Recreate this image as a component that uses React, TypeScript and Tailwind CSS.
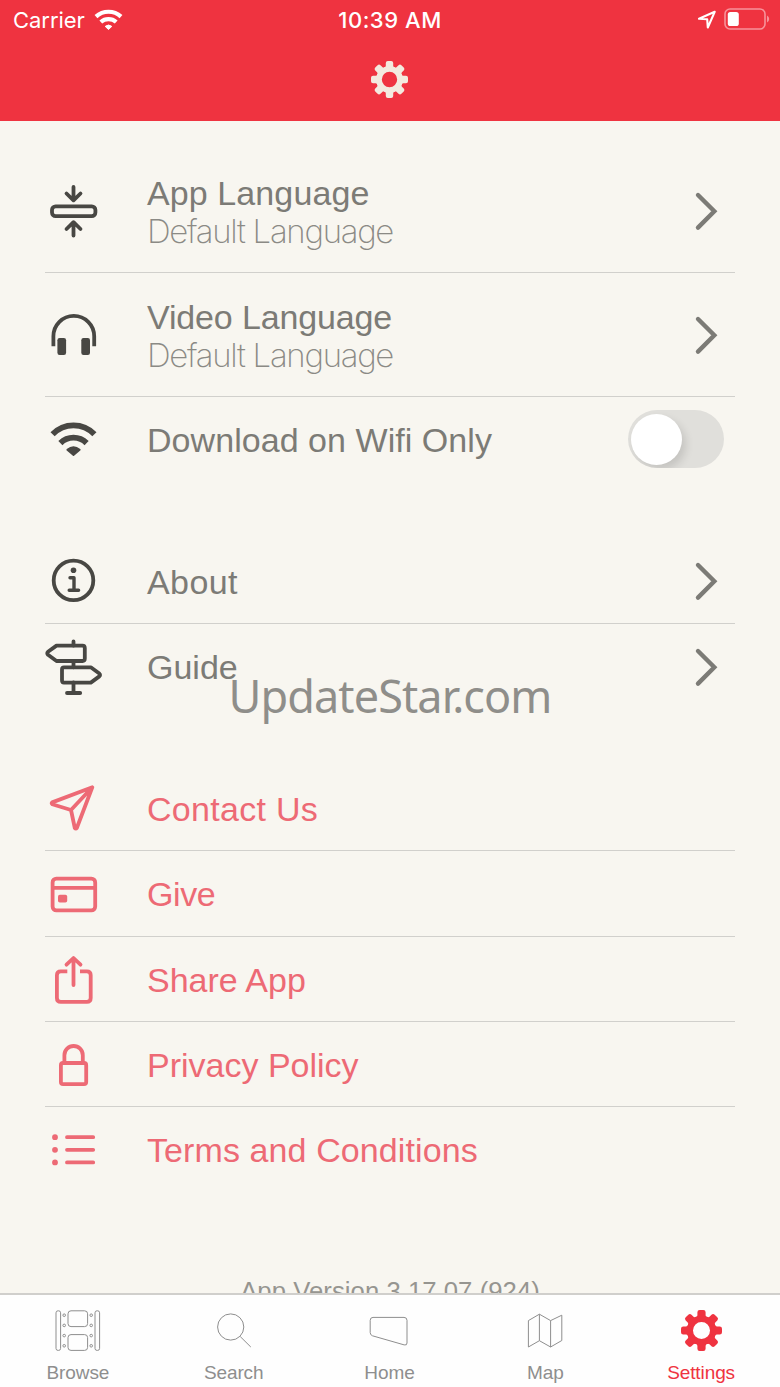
import type { ReactNode } from "react";

function Gear({ className }: { className: string }) {
  return (
    <svg viewBox="0 0 40 40" className={className} fill="currentColor">
      <circle cx="20" cy="20" r="11.3" fill="none" stroke="currentColor" strokeWidth="6" />
      {[0, 45, 90, 135, 180, 225, 270, 315].map((angle) => (
        <path
          key={angle}
          d="M16 2.2Q16 0 18.2 0H21.8Q24 0 24 2.2V5Q24 6.6 26 7.2L24 10H16L14 7.2Q16 6.6 16 5Z"
          transform={`rotate(${angle} 20 20)`}
        />
      ))}
    </svg>
  );
}

function Chevron() {
  return (
    <svg viewBox="0 0 24 40" className="mt-px mr-[17px] h-10 w-6 text-[#7c7b76]" fill="none" stroke="currentColor" strokeWidth="4.4" strokeLinecap="round" strokeLinejoin="miter">
      <path d="M4 4L20.3 20.3L4 36.6" />
    </svg>
  );
}

function Toggle() {
  return (
    <div className="mr-[11.5px] flex h-[58px] w-24 items-center overflow-hidden rounded-full bg-[#e0dfdb] pl-[3.5px]">
      <div className="h-[51px] w-[51px] rounded-full bg-white shadow-[4px_5px_9px_rgba(0,0,0,0.12)]" />
    </div>
  );
}

const icons = {
  appLanguage: (
    <>
      <path d="M29.5 6V19M22.5 12.5L29.5 19.3L36.5 12.5M29.5 54.5V41.5M22.5 48L29.5 41.2L36.5 48" />
      <rect x="8" y="25.3" width="43.4" height="9.8" rx="3.6" />
    </>
  ),
  headphones: (
    <>
      <path d="M9.4 41.3V31.3A20.4 20.4 0 0 1 50.2 31.3V41.3" strokeLinecap="butt" />
      <rect x="13.4" y="33" width="8.7" height="17" rx="2.2" fill="currentColor" stroke="none" />
      <rect x="37.3" y="33" width="8.7" height="17" rx="2.2" fill="currentColor" stroke="none" />
    </>
  ),
  wifi: (
    <>
      <path d="M8.6 24.2A29 29 0 0 1 50.4 24.2M16.4 33.1A18.5 18.5 0 0 1 42.6 33.1" strokeWidth="5.8" strokeLinecap="butt" />
      <path d="M23.3 39.8Q29.5 34.6 35.7 39.8L29.5 45Z" fill="currentColor" strokeWidth="1.8" />
    </>
  ),
  info: (
    <>
      <circle cx="29.5" cy="29.4" r="19.8" />
      <circle cx="29.5" cy="19.2" r="2.8" fill="currentColor" stroke="none" />
      <path d="M26 26.8H30V39.3M25.2 39.3H34.6" strokeWidth="3.4" />
    </>
  ),
  signpost: (
    <>
      <path d="M29.5 4.5V8.6M29.5 24V30.3M29.5 45.5V56M23 56H36.2" />
      <path d="M12.5 8.6H38.5Q40.8 8.6 40.8 11V21.6Q40.8 24 38.5 24H12.5L4 17.8Q2.5 16.3 4 14.8Z" />
      <path d="M46.8 30.3H20Q18 30.3 18 32.5V43.3Q18 45.6 20 45.6H46.8L55.3 39.4Q56.8 38 55.3 36.5Z" />
    </>
  ),
  send: (
    <path d="M48.3 9.3L8.2 24.4Q7 25.2 8.3 26.2L27 32L30.8 50Q31.8 51.2 32.8 50L48.3 9.3ZM27 32L48.3 9.3" />
  ),
  card: (
    <>
      <rect x="8.6" y="14.6" width="42.6" height="31.8" rx="3.8" />
      <path d="M9 23.8H51" />
      <rect x="14" y="30.7" width="9.2" height="7.8" rx="1.8" fill="currentColor" stroke="none" />
    </>
  ),
  share: (
    <>
      <path d="M23.3 22.3H16.8Q12.9 22.3 12.9 26.2V48.9Q12.9 52.8 16.8 52.8H42.8Q46.7 52.8 46.7 48.9V26.2Q46.7 22.3 42.8 22.3H36" strokeLinecap="butt" />
      <path d="M29.5 36V9.5M22.5 15.7L29.5 9L36.5 15.7" />
    </>
  ),
  lock: (
    <>
      <rect x="16.9" y="28" width="25.3" height="21.2" rx="2.2" />
      <path d="M20.4 28V20.2A9.2 9.2 0 0 1 38.8 20.2V28" />
    </>
  ),
  list: (
    <>
      <path d="M23 17.2H49.2M23 29.8H49.2M23 42.4H49.2" />
      <path d="M11 17.2H11.01M11 29.8H11.01M11 42.4H11.01" strokeWidth="5.8" />
    </>
  ),
};

type RowProps = {
  icon: ReactNode;
  title: string;
  tracking?: string;
  subtitle?: string;
  trailing?: ReactNode;
  accent?: boolean;
  last?: boolean;
};

function Row({ icon, title, tracking = "", subtitle, trailing, accent, last }: RowProps) {
  return (
    <div
      className={`flex items-center border-b ${last ? "border-transparent" : "border-[#d1d0cc]"} ${
        subtitle ? "h-[123.8px]" : "h-[85.4px]"
      }`}
    >
      <svg
        viewBox="0 0 60 60"
        className={`mt-px -ml-px h-[60px] w-[60px] shrink-0 ${accent ? "text-[#ed6a75]" : "text-[#484743]"}`}
        fill="none"
        stroke="currentColor"
        strokeWidth="3.8"
        strokeLinecap="round"
        strokeLinejoin="round"
      >
        {icon}
      </svg>
      <div className="ml-[43px] flex-1 pt-[2px] text-[34px] leading-[38px] whitespace-nowrap">
        <div className={`${tracking} ${accent ? "text-[#ed6a75]" : "text-[#7c7b76]"}`}>{title}</div>
        {subtitle && (
          <div className="font-['Inter'] text-[33px] font-extralight tracking-[-1.3px] text-[#8b8a85]">{subtitle}</div>
        )}
      </div>
      {trailing}
    </div>
  );
}

function Tab({ label, active, children }: { label: string; active?: boolean; children: ReactNode }) {
  return (
    <div className={`flex w-[155.8px] flex-col items-center ${active ? "text-[#ef3340]" : "text-[#8e8e8e]"}`}>
      <div className="mt-[13px] flex h-11 w-[60px] items-center justify-center">{children}</div>
      <div className="mt-[9px] text-[19px] leading-6 tracking-[-0.1px]">{label}</div>
    </div>
  );
}

function TabIcon({ children }: { children: ReactNode }) {
  return (
    <svg viewBox="0 0 60 44" className="h-11 w-[60px]" fill="none" stroke="currentColor" strokeWidth="1" strokeLinejoin="round">
      {children}
    </svg>
  );
}

function StatusBar() {
  return (
    <div className="grid h-10 grid-cols-3 items-center font-['Inter'] text-[22px] text-white">
      <div className="flex items-center gap-[9px] pl-[13px]">
        <span className="tracking-[-0.05px]">Carrier</span>
        <svg viewBox="0 0 30 22" className="mb-[3px] h-[22px] w-[30px]" fill="none" stroke="currentColor" strokeWidth="4.2">
          <path d="M2 8.6A18.5 18.5 0 0 1 27 8.6M6.8 14A11.6 11.6 0 0 1 22.2 14" />
          <path d="M11.2 18.4Q14.5 15.6 17.8 18.4L14.5 21.5Z" fill="currentColor" strokeWidth="1" />
        </svg>
      </div>
      <div className="text-center font-medium tracking-[0.55px]">10:39 AM</div>
      <div className="flex items-center justify-end gap-[7px] pr-[10px]">
        <svg viewBox="0 0 20 20" className="h-5 w-5" fill="none" stroke="currentColor" strokeWidth="2.1" strokeLinejoin="round">
          <path d="M17.7 1.8L2 8.8L10.2 9.3L10.8 17.5Z" />
        </svg>
        <svg viewBox="0 0 46 22" className="mb-[2px] h-[22px] w-[46px]">
          <rect x="1" y="1" width="40" height="20" rx="5" fill="none" stroke="#f7929a" strokeWidth="1.6" />
          <rect x="3.8" y="4" width="11" height="14" rx="2.6" fill="white" />
          <path d="M43 7.5Q45.2 8.5 45.2 11T43 14.5Z" fill="#f7929a" />
        </svg>
      </div>
    </div>
  );
}

export default function App() {
  return (
    <div className="relative flex h-[1387px] w-[780px] flex-col overflow-hidden bg-[#f8f6f0] font-['Liberation_Sans',Arial,sans-serif]">
      <header className="h-[121px] shrink-0 bg-[#ef3340]">
        <StatusBar />
        <div className="mt-[21px] flex justify-center pr-px">
          <Gear className="h-[37px] w-[37px] text-[#f3eadf]" />
        </div>
      </header>

      <main className="min-h-0 flex-1 overflow-hidden px-[45px] pt-[28.6px]">
        <section>
          <Row icon={icons.appLanguage} title="App Language" tracking="tracking-[0.1px]" subtitle="Default Language" trailing={<Chevron />} />
          <Row icon={icons.headphones} title="Video Language" tracking="tracking-[-0.15px]" subtitle="Default Language" trailing={<Chevron />} />
          <Row icon={icons.wifi} title="Download on Wifi Only" tracking="tracking-[0.05px]" trailing={<Toggle />} last />
        </section>
        <section className="mt-[56.2px]">
          <Row icon={icons.info} title="About" tracking="tracking-[0.4px]" trailing={<Chevron />} />
          <Row icon={icons.signpost} title="Guide" trailing={<Chevron />} last />
        </section>
        <section className="mt-[56.2px]">
          <Row icon={icons.send} title="Contact Us" tracking="tracking-[0.3px]" accent />
          <Row icon={icons.card} title="Give" tracking="tracking-[-0.4px]" accent />
          <Row icon={icons.share} title="Share App" accent />
          <Row icon={icons.lock} title="Privacy Policy" accent />
          <Row icon={icons.list} title="Terms and Conditions" tracking="tracking-[0.1px]" accent last />
        </section>
        <p className="mt-[82px] text-center text-[25.7px] leading-8 tracking-[0.05px] text-[#969590]">App Version 3.17.07 (924)</p>
      </main>

      <nav className="flex h-[94px] shrink-0 border-t-2 border-[#d0cfcc] bg-[#fefefe]">
        <Tab label="Browse">
          <TabIcon>
            <rect x="8" y="2.8" width="4.6" height="39.6" rx="2" />
            <rect x="47" y="2.8" width="4.6" height="39.6" rx="2" />
            <rect x="20" y="2.8" width="19.6" height="15.8" rx="3" />
            <rect x="20" y="26.6" width="19.6" height="15.8" rx="3" />
            {[7.2, 17.4, 27.6, 37.8].map((y) => (
              <g key={y}>
                <circle cx="16.2" cy={y} r="1.3" />
                <circle cx="43.2" cy={y} r="1.3" />
              </g>
            ))}
          </TabIcon>
        </Tab>
        <Tab label="Search">
          <TabIcon>
            <circle cx="26.7" cy="19" r="13.1" />
            <path d="M36.2 28.5L46.8 39" />
          </TabIcon>
        </Tab>
        <Tab label="Home">
          <TabIcon>
            <path d="M14 9.4H45Q48 9.4 48 12.4V35Q48 37.6 45.2 36.9L13.5 27.8Q11.2 27 11.2 24.5V12.4Q11.2 9.4 14 9.4Z" />
          </TabIcon>
        </Tab>
        <Tab label="Map">
          <TabIcon>
            <path d="M13.4 12.6L24.4 6.2L35.6 12.6L46.8 7.2V32.5L35.6 39L24.4 32.7L13.4 39ZM24.4 6.2V32.7M35.6 12.6V39" />
          </TabIcon>
        </Tab>
        <Tab label="Settings" active>
          <Gear className="h-[41px] w-[41px]" />
        </Tab>
      </nav>

      <div className="pointer-events-none absolute inset-x-0 top-[666px] text-center font-['Noto_Sans'] text-[45px] leading-[60px] tracking-[-0.9px] text-[#8f8e8a]">
        UpdateStar.com
      </div>
    </div>
  );
}
